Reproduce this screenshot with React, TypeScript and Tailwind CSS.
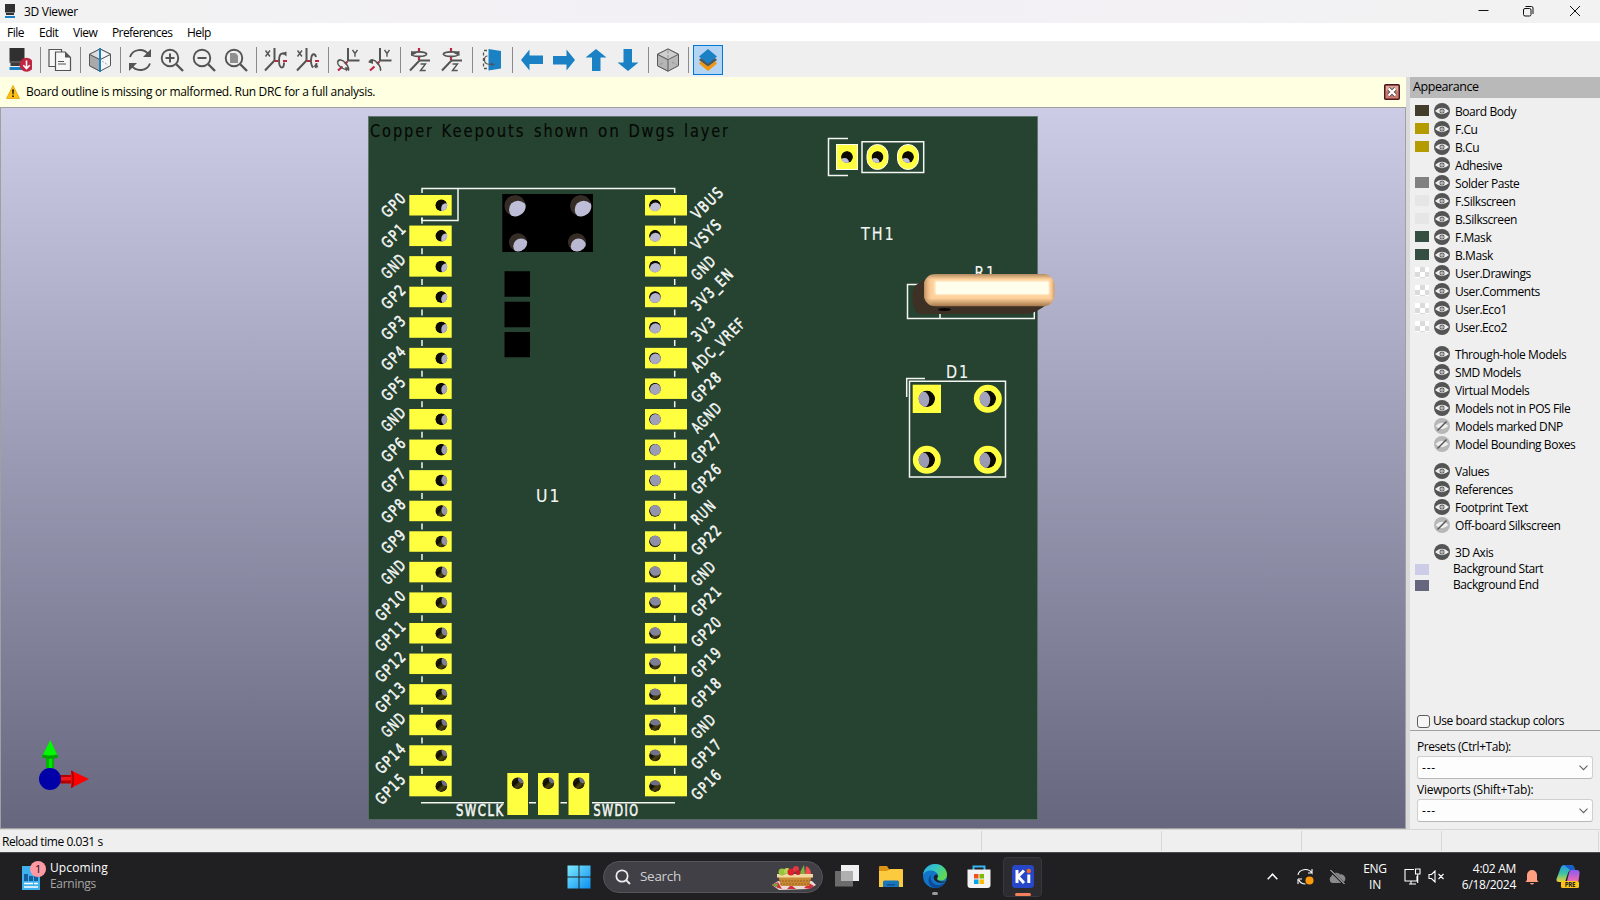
import type { ReactNode } from "react";

const PITCH = 30.57;
const LEFT = ["GP0","GP1","GND","GP2","GP3","GP4","GP5","GND","GP6","GP7","GP8","GP9","GND","GP10","GP11","GP12","GP13","GND","GP14","GP15"];
const RIGHT = ["VBUS","VSYS","GND","3V3_EN","3V3","ADC_VREF","GP28","AGND","GP27","GP26","RUN","GP22","GND","GP21","GP20","GP19","GP18","GND","GP17","GP16"];

const G = "#545454";
const RED = "#bf2641";
const BLUE = "#1a81c4";

function Ic({ children, size = 24 }: { children: ReactNode; size?: number }) {
  return <svg width={size} height={size} viewBox="0 0 24 24" fill="none">{children}</svg>;
}

function Cube({ split }: { split?: boolean }) {
  return (
    <Ic>
      <path d="M12 1 22.5 6.3V17.7L12 23.2 1.5 17.7V6.3Z" fill={split ? "#f6f6f6" : "#b8b8b8"} stroke={G} strokeWidth="1" />
      <path d="M1.5 6.3 12 11.6V23.2L1.5 17.7Z" fill={split ? "#a9a9a9" : "#b5b5b5"} stroke={G} strokeWidth=".9" />
      <path d="M1.5 6.3 12 1 22.5 6.3 12 11.6Z" fill={split ? "#dedede" : "#cfcfcf"} stroke={G} strokeWidth=".9" />
      {split ? (
        <>
          <path d="M12 1 22.5 6.3 12 11.6Z" fill="#f6f6f6" stroke={G} strokeWidth=".9" />
          <path d="M14 13l6 4" stroke="#999" strokeDasharray="2 1.5" strokeWidth=".9" />
          <path d="M12 0v24" stroke={BLUE} strokeWidth="2" />
        </>
      ) : (
        <path d="M12 2.5v9M4 16.5l4-2.2M16 14l5 3" stroke="#8d8d8d" strokeWidth=".9" strokeDasharray="3 1.5" />
      )}
    </Ic>
  );
}

function Mag({ kind }: { kind: "plus" | "minus" | "fit" }) {
  return (
    <Ic>
      <circle cx="10" cy="10" r="8.3" stroke={G} strokeWidth="1.9" />
      <path d="M16 16l7 7" stroke={G} strokeWidth="2.4" />
      {kind !== "fit" && <path d="M5.500 10h9" stroke={G} strokeWidth="2" />}
      {kind === "plus" && <path d="M10 5.500v9" stroke={G} strokeWidth="2" />}
      {kind === "fit" && <path d="M6 5h5.5L14 7.5V15H6Z" fill="#8f8f8f" />}
    </Ic>
  );
}

function RotX({ flip }: { flip?: boolean }) {
  return (
    <Ic>
      <path d="M1.5 2.5l4.500 6M6 2.5l-4.500 6" stroke={G} strokeWidth="1.4" />
      <path d="M10.5 0v12.5L1 22.5" stroke={G} strokeWidth="2" />
      <path d="M11 13h3m5 0h4" stroke={RED} strokeWidth="2.2" />
      <path d={flip ? "M20 9c-1-4-4-3.5-4.7.5-.8 4 0 9 2 10M20.5 15c0 2 0 3.500-1 5" : "M20.500 6c-4-2-5.500 1.500-5.500 6 0 5 1 7.500 3 7.500 1.500 0 2-2 2-5"} stroke={G} strokeWidth="1.9" />
      <path d={flip ? "M17 18.500l3.500-3 2 4Z" : "M18 5l4.500-1.500v5Z"} fill={G} />
    </Ic>
  );
}

function RotY({ flip }: { flip?: boolean }) {
  return (
    <Ic>
      <path d="M16.500 2l2.500 3.500 2.500-3.500M19 5.500v3.300" stroke={G} strokeWidth="1.4" />
      <path d="M12 0v12.500h11.500" stroke={G} strokeWidth="2" />
      <path d="M11.500 13.500L9 16M6.500 18.500l-4.500 4" stroke={RED} strokeWidth="2.2" />
      <path d="M1.500 14.500c1-4 5-3 8 .5 2.500 3 4 6.500 2.500 7.500" stroke={G} strokeWidth="1.6" />
      <path d={flip ? "M0 14l5-3v5Z" : "M9 19l4.500 1-3.500 3.500Z"} fill={G} />
      {!flip && <path d="M1.500 14.500c0 3 5 6.500 9 7" stroke={G} strokeWidth="1.4" />}
    </Ic>
  );
}

function RotZ({ flip }: { flip?: boolean }) {
  return (
    <Ic>
      <path d="M11 0v4.500M11 8v4" stroke={RED} strokeWidth="2.200" />
      <path d={flip ? "M19 4.500c-4-1-14-1-15.500 1.200C2.500 9 18 9.500 18.500 6" : "M4 4.500c4-1 13-1 14.500 1.200C19.500 9 4 9.500 3.500 6"} stroke={G} strokeWidth="1.600" />
      <path d={flip ? "M13.500 5l6-2v5Z" : "M3 3l6 2-6 3Z"} fill={G} />
      <path d="M22 12.500H11.500L2 22.500" stroke={G} strokeWidth="2" />
      <path d="M12.500 16h5l-5 6.500h5.200" stroke={G} strokeWidth="1.400" />
    </Ic>
  );
}

function Arrow({ dir }: { dir: number }) {
  return (
    <Ic><path transform={`rotate(${dir} 12 12)`} d="M1 12 9.500 1.500V7.500H23V16H9.500V22.500Z" fill={BLUE} /></Ic>
  );
}

function Board() {
  return (
    <Ic>
      <path d="M1.500 0h15v13h-15Z" fill="#303030" />
      <path d="M1.500 13h15v2h-15Z" fill="#555" />
      <path d="M2.500 15h13v3h-13Z" fill="#3a3a3a" />
      <path d="M1.500 19h15v3h-15Z" fill={BLUE} />
      <circle cx="18.500" cy="16.800" r="7" fill={RED} />
      <path d="M18.500 12.500v7.500M15.300 17.300l3.200 3.200 3.200-3.200" stroke="#fff" strokeWidth="1.600" />
    </Ic>
  );
}

function Toolbar() {
  const items: ReactNode[] = [
    <Board />, null,
    <Ic>
      <path d="M1 1.500h12.500v17H1Z" fill="#f7f7f7" stroke={G} strokeWidth="1.200" />
      <path d="M7.500 4h9.500l5.500 5.500V22.500h-15Z" fill="#f7f7f7" stroke={G} strokeWidth="1.200" />
      <path d="M17 3.500V9.500h6Z" fill={G} /><path d="M10 13.500h6M10 16h8" stroke={G} strokeWidth="1.200" />
    </Ic>, null,
    <Cube split />, null,
    <Ic>
      <path d="M2 9C5 .5 16 0 20.500 6.500M22 15.500C19 23.500 8 24 3.500 17.500" stroke={G} strokeWidth="1.900" />
      <path d="M23 1v8h-8ZM1 23v-8h8Z" fill={G} />
    </Ic>,
    <Mag kind="plus" />, <Mag kind="minus" />, <Mag kind="fit" />, null,
    <RotX />, <RotX flip />, null, <RotY />, <RotY flip />, null, <RotZ />, <RotZ flip />, null,
    <Ic>
      <path d="M8.500 1 21 3V20.500L8.500 22.500Z" fill={BLUE} />
      <path d="M7 2.500H3.500V20.500H7" stroke={G} strokeWidth="1.300" strokeDasharray="3 2.500" />
      <path d="M7.500 8c-4 0-4 7 0 8l6 .5" stroke={G} strokeWidth="1.200" /><path d="M11 14.500l4 2-4 1.500Z" fill={G} />
    </Ic>, null,
    <Arrow dir={0} />, <Arrow dir={180} />, <Arrow dir={90} />, <Arrow dir={270} />, null,
    <Cube />, null,
    <Ic>
      <path d="M12 23 3 15.500l2-2 7 5 7-5 2 2Z" fill="#f2960c" /><path d="M12 18.500 3 12l2-2 7 4.500L19 10l2 2Z" fill="#545454" />
      <path d="M12 1l9 7.500-9 7.500-9-7.500Z" fill={BLUE} />
    </Ic>,
  ];
  return (
    <div className="flex h-9 shrink-0 items-center bg-[#efefef] pt-[2px] pl-1">
      {items.map((it, i) =>
        it === null ? (
          <div key={i} className="flex h-[26px] w-2 justify-center"><div className="w-px bg-[#8b8b8b]" /></div>
        ) : (
          <div key={i} className="flex w-8 justify-center">
            {i === items.length - 1 ? (
              <div className="flex h-[30px] w-[30px] items-center justify-center border border-[#0078d7] bg-[#b3d4f2]">{it}</div>
            ) : it}
          </div>
        )
      )}
    </div>
  );
}

function Clip({ x, y, r, children }: { x: number; y: number; r: number; children: ReactNode }) {
  const id = `c${Math.round(x * 10)}-${Math.round(y * 10)}`;
  return (
    <g clipPath={`url(#${id})`}>
      <clipPath id={id}><circle cx={x} cy={y} r={r} /></clipPath>
      {children}
    </g>
  );
}

function Hole({ x, y, side, row }: { x: number; y: number; side: "l" | "r"; row: number }) {
  const t = row / 19;
  return (
    <Clip x={x} y={y} r={6}>
      <circle cx={x} cy={y} r="6" fill={t < 0.5 ? "#0c0b02" : "url(#barrel)"} />
      {side === "l" ? (
        <ellipse cx={x + 4.2} cy={y + 3.5 - t * 8} rx={4.3 - t * 0.4} ry={5.6 - t * 1.2} fill="url(#bg)" />
      ) : (
        <ellipse cx={x + 0.5} cy={y + 3 - t * 7} rx={5.6} ry={5.8 - Math.max(0, t - 0.5) * 5} fill="url(#bg)" />
      )}
    </Clip>
  );
}

function Silk({ x, y, w, size, anchor = "start", color = "#f4f6f4", rot, children, bold }: { x: number; y: number; w: number; size: number; anchor?: "start" | "middle" | "end"; color?: string; rot?: boolean; children: string; bold?: boolean }) {
  return (
    <text x={x} y={y} fontSize={size} textLength={w} letterSpacing={size * 0.13} lengthAdjust="spacingAndGlyphs" textAnchor={anchor} fill={color} stroke={color} strokeWidth={bold ? 0.6 : 0.15} fontFamily='"DejaVu Sans", sans-serif' transform={rot ? `rotate(-45 ${x} ${y})` : undefined}>
      {children}
    </text>
  );
}

function Scene() {
  const rowY = (i: number) => 205.3 + i * PITCH;
  return (
    <svg width="1404" height="720" viewBox="1 108 1404 720" className="block">
      <defs>
        <linearGradient id="bg" gradientUnits="userSpaceOnUse" x1="0" y1="108" x2="0" y2="828">
          <stop offset="0" stopColor="#cccce6" /><stop offset="1" stopColor="#66667f" />
        </linearGradient>
        <linearGradient id="barrel" x1="0" y1="0" x2="1" y2="1">
          <stop offset="0" stopColor="#3a3408" /><stop offset=".4" stopColor="#0c0b02" /><stop offset=".6" stopColor="#4a430e" /><stop offset="1" stopColor="#0c0b02" />
        </linearGradient>
        <linearGradient id="th" x1="0" y1="0" x2="0" y2="1">
          <stop offset="0" stopColor="#b08a60" /><stop offset=".16" stopColor="#ffd19a" /><stop offset=".75" stopColor="#ffd09a" /><stop offset="1" stopColor="#a5794c" />
        </linearGradient>
        <linearGradient id="thx" x1="0" y1="0" x2="1" y2="0">
          <stop offset="0" stopColor="#96683c" stopOpacity=".65" /><stop offset=".07" stopColor="#ffd09a" stopOpacity="0" /><stop offset=".96" stopColor="#ffd09a" stopOpacity="0" /><stop offset="1" stopColor="#96683c" stopOpacity=".55" />
        </linearGradient>
        <filter id="soft" x="-10%" y="-30%" width="120%" height="160%"><feGaussianBlur stdDeviation="1.2" /></filter>
      </defs>
      <rect x="1" y="108" width="1404" height="720" fill="url(#bg)" />
      <rect x="368.500" y="116.500" width="669" height="703" fill="#264230" stroke="#5c7168" strokeWidth=".8" />
      <g>
        <Silk x={370} y={136.700} w={64} size={18} color="#050805">Copper</Silk>
        <Silk x={441.500} y={136.700} w={84} size={18} color="#050805">Keepouts</Silk>
        <Silk x={534} y={136.700} w={56} size={18} color="#050805">shown</Silk>
        <Silk x={598} y={136.700} w={23} size={18} color="#050805">on</Silk>
        <Silk x={628.500} y={136.700} w={47.500} size={18} color="#050805">Dwgs</Silk>
        <Silk x={684} y={136.700} w={46} size={18} color="#050805">layer</Silk>
      </g>

      <g stroke="#f4f6f4" strokeWidth="1.500" fill="none">
        <path d="M422 193v-4.500H674.700V193M458 188.500V220.500H422V217.500" />
        <path d="M421 802.700H504M529 802.700h7M560.500 802.700h6.500M592 802.700h83" />
        {LEFT.slice(0, 19).map((_, i) => (
          <path key={i} d={`M422 ${rowY(i) + 12.500}v6M674.700 ${rowY(i) + 12.500}v6`} />
        ))}
        <path d="M848 138.500H828.500V175.500H848M862 141.700H923.700V172.500H862Z" />
        <path d="M907.500 284.500H1034.300V318.500H907.500ZM940 314v5" />
        <path d="M909.500 381.300H1005.500V477H909.500ZM925 378.500H906.700V397" />
      </g>

      {LEFT.map((l, i) => (
        <g key={i}>
          <rect x="409.300" y={rowY(i) - 10.300} width="42.400" height="20.500" fill="#ffff40" />
          <Hole x={441.300} y={rowY(i)} side="l" row={i} />
          <Silk x={407.500} y={rowY(i) - 6.500} w={l.length * 8.500 + 2.500} size={15.500} anchor="end" rot bold>{l}</Silk>
        </g>
      ))}
      {RIGHT.map((l, i) => (
        <g key={i}>
          <rect x="645" y={rowY(i) - 10.300} width="42" height="20.500" fill="#ffff40" />
          <Hole x={655} y={rowY(i)} side="r" row={i} />
          <Silk x={697.700} y={rowY(i) + 14.800} w={l.length * 8.300 + (i === 0 ? 5.500 : 3)} size={15.500} rot bold>{l}</Silk>
        </g>
      ))}
      {[507.300, 538, 568.500].map((x) => (
        <g key={x}>
          <rect x={x} y="773" width="20.700" height="42" fill="#ffff40" />
          <Hole x={x + 10.300} y={783.300} side="l" row={19} />
        </g>
      ))}
      <Silk x={456} y={816.300} w={48.500} size={15.500} bold>SWCLK</Silk>
      <Silk x={593.500} y={816.300} w={46} size={15.500} bold>SWDIO</Silk>

      <rect x="502.300" y="194" width="90.700" height="58" fill="#000" />
      {[[515, 205.700, 10.700], [580.700, 205.700, 10.700], [518, 242.300, 9.200], [577, 242.300, 9.200]].map(([x, y, r]) => (
        <Clip key={`${x}-${y}`} x={x} y={y} r={r}>
          <circle cx={x} cy={y} r={r} fill="#352c25" />
          <circle cx={x + (x === 577 ? 1.5 : 3)} cy={y + 4} r={r * 0.84} fill="url(#bg)" />
        </Clip>
      ))}
      <path d="M504.500 271.300h25.500v25.500h-25.500ZM504.500 301.700h25.500v25.500h-25.500ZM504.500 332h25.500v25.300h-25.500Z" fill="#000" />
      <Silk x={536} y={502} w={25.500} size={18.500}>U1</Silk>

      <rect x="836.500" y="144.500" width="21" height="25" fill="#ffff40" stroke="#fffff0" strokeWidth="1" />
      {[877.500, 908].map((x) => (
        <rect key={x} x={x - 10.500} y="144.500" width="21" height="25" rx="10.500" fill="#ffff40" stroke="#fffff0" strokeWidth="1" />
      ))}
      {[847, 877.500, 908].map((x) => (
        <Clip key={x} x={x} y={157} r={6}>
          <circle cx={x} cy="157" r="6" fill="#0c0b02" /><circle cx={x - 2.500} cy="162.500" r="4.500" fill="#c0c0dc" />
        </Clip>
      ))}
      <Silk x={861} y={240} w={34.500} size={18.500}>TH1</Silk>
      <Silk x={974.500} y={279} w={22} size={18.500}>R1</Silk>
      <Silk x={946} y={377.500} w={24} size={18.500}>D1</Silk>

      <path d="M927 278 916 285Q912.500 288 912.500 297Q912.500 314 922 314H1028Q1034 314 1049 303Z" fill="#3d3025" />
      <ellipse cx="944.500" cy="309.500" rx="6.500" ry="1.500" fill="#080504" />
      <rect x="924" y="274" width="130.500" height="32.300" rx="11" fill="url(#th)" />
      <rect x="924" y="274" width="130.500" height="32.300" rx="11" fill="url(#thx)" />
      <rect x="935" y="281" width="114" height="13.500" rx="1" fill="#fffde8" filter="url(#soft)" />
      <rect x="936" y="282" width="112.500" height="12" fill="#fffeec" />

      <rect x="912.700" y="384.700" width="28.300" height="28.300" fill="#ffff40" />
      {[[987.800, 398.800], [926.800, 459.800], [987.800, 459.800]].map(([x, y]) => (
        <circle key={`${x}-${y}`} cx={x} cy={y} r="14" fill="#ffff40" />
      ))}
      {[[926.800, 398.800], [987.800, 398.800], [926.800, 459.800], [987.800, 459.800]].map(([x, y]) => (
        <Clip key={`${x}-${y}`} x={x} y={y} r={8.300}>
          <circle cx={x} cy={y} r="8.300" fill="#0c0b02" /><ellipse cx={x - 3.800} cy={y + 0.800} rx="6.300" ry="8" fill="url(#bg)" />
        </Clip>
      ))}

      <path d="M46 768V757H54V768Z" fill="#00b400" /><path d="M49 768V757h3v11Z" fill="#00e800" />
      <path d="M50.300 740 58.500 757.500H41.500Z" fill="#00f800" /><path d="M41.500 757.500q8.500 2.500 17 0l-1.500-3q-7 2-14 0Z" fill="#00a000" />
      <path d="M60 775H72V783.500H60Z" fill="#b40000" /><path d="M60 777H72v3.500H60Z" fill="#f01818" />
      <path d="M89 779 71 770.500V788Z" fill="#ff0000" /><path d="M71 770.500q3 8.500 0 17.500l2-1q2-7.500 0-15.500Z" fill="#980000" />
      <circle cx="50" cy="779" r="11" fill="#0000a8" />
    </svg>
  );
}

function Eye({ off }: { off?: boolean }) {
  return off ? (
    <svg width="16" height="16" viewBox="0 0 16 16"><circle cx="8" cy="8" r="8" fill="#b7b7b7" /><path d="M1.500 8Q8 1.500 14.500 8 8 14.500 1.500 8" fill="#efefef" /><path d="M3.500 12.500 12.500 3.500" stroke="#545454" strokeWidth="1.500" /></svg>
  ) : (
    <svg width="16" height="16" viewBox="0 0 16 16"><circle cx="8" cy="8" r="8" fill="#545454" /><path d="M1 8Q8 1.500 15 8 8 14.500 1 8" fill="#efefef" /><circle cx="8" cy="8" r="2.500" fill="#545454" /><circle cx="8" cy="8" r="1.600" fill="#efefef" /><circle cx="8" cy="8" r=".7" fill="#545454" /></svg>
  );
}

function Swatch({ c }: { c?: string }) {
  if (c === "check")
    return (
      <svg width="14" height="11" viewBox="0 0 14 11"><path d="M0 0h14v11H0Z" fill="#fff" /><path d="M5 0h5v5H5ZM0 5h5v5H0ZM10 5h4v5h-4ZM5 10h5v1H5Z" fill="#dbdbdb" /></svg>
    );
  return <svg width="14" height="11"><rect width="14" height="11" fill={c ?? "none"} /></svg>;
}

function Row({ c, t, off }: { c?: string; t: string; off?: boolean }) {
  return (
    <div className="flex h-[18px] items-center">
      <div className="mr-[5px] flex pb-px"><Swatch c={c} /></div>
      <Eye off={off} />
      <span className="pt-px pl-[5px]">{t}</span>
    </div>
  );
}

function Select() {
  return (
    <div className="flex h-[23px] items-center justify-between rounded-[3px] border border-[#cfcfcf] border-b-[#b8b8b8] bg-[#fdfdfd] pr-1 pl-1">
      <span className="tracking-[0.8px]">---</span>
      <svg width="9" height="6" viewBox="0 0 9 6" fill="none"><path d="M.5.7l4 4 4-4" stroke="#606060" strokeWidth="1.100" /></svg>
    </div>
  );
}

function Appearance() {
  return (
    <aside className="flex w-[190px] shrink-0 flex-col bg-[#efefef] tracking-[-0.43px]">
      <div className="flex h-[21px] items-center bg-[#b9b9b9] pl-[3px] text-[12.500px]">Appearance</div>
      <div className="flex flex-col gap-[9px] pt-1 pl-[5px]">
        <div>
          <Row c="#443d2b" t="Board Body" /><Row c="#b49b00" t="F.Cu" /><Row c="#b49b00" t="B.Cu" /><Row t="Adhesive" />
          <Row c="#808080" t="Solder Paste" /><Row c="#e6e6e6" t="F.Silkscreen" /><Row c="#e6e6e6" t="B.Silkscreen" />
          <Row c="#344f41" t="F.Mask" /><Row c="#344f41" t="B.Mask" />
          <Row c="check" t="User.Drawings" /><Row c="check" t="User.Comments" /><Row c="check" t="User.Eco1" /><Row c="check" t="User.Eco2" />
        </div>
        <div>
          <Row t="Through-hole Models" /><Row t="SMD Models" /><Row t="Virtual Models" /><Row t="Models not in POS File" />
          <Row off t="Models marked DNP" /><Row off t="Model Bounding Boxes" />
        </div>
        <div><Row t="Values" /><Row t="References" /><Row t="Footprint Text" /><Row off t="Off-board Silkscreen" /></div>
        <div>
          <Row t="3D Axis" />
          <div className="flex h-4 items-center gap-6"><Swatch c="#cccce6" />Background Start</div>
          <div className="flex h-4 items-center gap-6"><Swatch c="#66667f" />Background End</div>
        </div>
      </div>
      <label className="mt-auto flex h-[18px] items-center gap-[3px] pl-[7px]">
        <span className="h-[13px] w-[13px] rounded-[3px] border border-[#5c5c5c] bg-[#f6f6f6]" />Use board stackup colors
      </label>
      <div className="flex h-[99px] flex-col border-t border-[#a0a0a0] px-[7px] pt-2">
        <div className="flex h-[17px] items-center pb-px">Presets (Ctrl+Tab):</div>
        <Select />
        <div className="mt-[3px] flex h-[17px] items-center pb-px tracking-[-0.25px]">Viewports (Shift+Tab):</div>
        <Select />
      </div>
    </aside>
  );
}

function Taskbar() {
  return (
    <footer className="flex h-12 shrink-0 items-center border-t border-[#4a4a4a] bg-[#202022] font-['Open_Sans','Noto_Sans',sans-serif] text-[12px] text-white">
      <div className="flex w-[567px] items-center gap-[4px] pl-[22px] pb-[2px]">
        <svg width="24" height="30" viewBox="0 0 24 30">
          <path d="M0 5h18v24H0Z" fill="#3fb0ee" /><path d="M2 13h4v7H2ZM7 15h4v5H7ZM12 13h4v7h-4Z" fill="#155e9c" />
          <path d="M2 22.500h9M12 22.500h4M2 26h14" stroke="#fff" strokeWidth="1.600" />
          <circle cx="16" cy="8" r="8" fill="#ff99a4" /><text x="16" y="12" fontSize="11" textAnchor="middle" fill="#111" fontFamily="Open Sans">1</text>
        </svg>
        <div className="leading-4"><div className="tracking-[0.1px]">Upcoming</div><div className="text-[#a5a5a5]">Earnings</div></div>
      </div>
      <svg width="24" height="24" viewBox="0 0 24 24">
        <defs><linearGradient id="win" x2="1" y2="1"><stop stopColor="#7eeaff" /><stop offset="1" stopColor="#0c8ff0" /></linearGradient></defs>
        <path d="M.5.5h11v11H.5ZM12.500.5h11v11h-11ZM.5 12.500h11v11H.5ZM12.500 12.500h11v11h-11Z" fill="url(#win)" />
      </svg>
      <div className="ml-[12px] flex h-8 w-[220px] items-center rounded-full border border-[#55555a] bg-[#404046] pl-[11px]">
        <svg width="16" height="16" viewBox="0 0 16 16" fill="none"><circle cx="7" cy="7" r="5.700" stroke="#eee" strokeWidth="1.700" /><path d="M11 11l4 4" stroke="#eee" strokeWidth="1.800" /></svg>
        <span className="ml-[9px] text-[13.500px] text-[#d0d0d0]">Search</span>
        <svg className="ml-auto mr-[5px]" width="46" height="26" viewBox="0 0 46 26">
          <path d="M1 21 7 17H41L45 21 38 25 8 26Z" fill="#ead9d4" /><path d="M1 21l6-3 4 7-4-1ZM16 25l4-4 5 4ZM33 24l5-5 5 3-4 3Z" fill="#d3303c" /><path d="M1 21l6-2-1 4Z" fill="#72a83a" />
          <path d="M7 11H41L38 22H10Z" fill="#c98a36" /><path d="M6 10H42V13.500H6Z" fill="#f0d8a0" /><path d="M8 17h31M9 20h29" stroke="#9b5e20" strokeWidth="1" strokeDasharray="2 1" />
          <circle cx="11" cy="8" r="3.500" fill="#9bc53d" /><circle cx="16" cy="7" r="3" fill="#b9d857" /><circle cx="20" cy="8" r="3.500" fill="#d8232f" /><circle cx="25" cy="5" r="3" fill="#e23842" /><path d="M28 10 33 1 34 10Z" fill="#7db53c" /><path d="M34 10 35 2q5 2 5 8Z" fill="#ee4c50" /><circle cx="27" cy="8.500" r="2.500" fill="#c81e2c" />
        </svg>
      </div>
      <svg className="ml-3" width="24" height="24" viewBox="0 0 24 24"><path d="M6 0h18v16H6Z" fill="#f0f0f0" /><path d="M0 6h18v15.500H0Z" fill="#6c6c6c" /><path d="M6 6h12v10H6Z" fill="#b0b0b0" /></svg>
      <svg className="ml-5" width="24" height="24" viewBox="0 0 24 24"><path d="M0 2q0-1 1-1h7l2 3v5H0Z" fill="#dc9412" /><path d="M0 6h8l3-2h12q1 0 1 1v17H0Z" fill="#fcca3e" /><path d="M4 22v-5q0-1.500 1.500-1.500h13Q20 15.500 20 17v5Z" fill="#1976bd" /><path d="M8 19h8v1.500H8Z" fill="#0d538d" /></svg>
      <div className="ml-5 flex flex-col items-center gap-1 pt-[6px]">
        <svg width="24" height="24" viewBox="0 0 24 24">
          <defs><linearGradient id="eg" x2="1" y2=".5"><stop stopColor="#2ba4e8" /><stop offset=".5" stopColor="#35c6c4" /><stop offset="1" stopColor="#5ed850" /></linearGradient></defs>
          <circle cx="12" cy="12" r="12" fill="#1275c9" />
          <path d="M0 11C1 4 6 0 12 0c7 0 12 5 12 10.500 0 4-3 6-6 6-2.500 0-4.500-.8-4-2 1-1 1.500-2 1-3.500C14 8 11 6.500 8 6.500c-4 0-7 2-8 4.500Z" fill="url(#eg)" />
          <path d="M9 10c-3 3-1 10 5 11 3 .5 6-1 8-3-1 4-6 6-10 6-7-1-9-10-3-14Z" fill="#0b4c9a" />
          <path d="M14 10.500c-3-.5-4.500 3-2 6 3 3 8 3 11.500.5-1 .5-9 2-9.500-2.500.8-1 1.300-2.500 0-4Z" fill="#202022" />
        </svg>
        <span className="h-[3px] w-[6px] rounded-full bg-[#9a9a9a]" />
      </div>
      <svg className="ml-5" width="24" height="24" viewBox="0 0 24 24"><path d="M6.500 6V1.500h11V6" stroke="#36b6f0" strokeWidth="2" fill="none" /><path d="M.5 4.500h23v15.500q0 3-3 3h-17q-3 0-3-3Z" fill="#f2f2f2" /><path d="M7 9h4.500v4.500H7Z" fill="#f25022" /><path d="M12.500 9H17v4.500h-4.500Z" fill="#7fba00" /><path d="M7 14.500h4.500V19H7Z" fill="#00a4ef" /><path d="M12.500 14.500H17V19h-4.500Z" fill="#ffb900" /></svg>
      <div className="ml-3 flex h-10 w-[39px] flex-col items-center justify-end rounded border border-[#38383c] bg-[#2c2c30]">
        <svg width="22" height="24" viewBox="0 0 22 24"><rect width="22" height="23" rx="3.500" fill="#2846c8" /><path d="M5 5v13M12 5.500 6 11.500l6 6.500" stroke="#fff" strokeWidth="3" fill="none" /><path d="M16.800 9.500V18" stroke="#fff" strokeWidth="3" /><circle cx="16.800" cy="6" r="2.200" fill="#f26a1b" /></svg>
        <span className="mt-1 h-[3px] w-4 rounded-full bg-[#f5805c]" />
      </div>
      <div className="ml-auto flex items-center pr-[20px]">
        <svg width="11" height="7" viewBox="0 0 11 7" fill="none"><path d="M.7 6.200l4.800-5 4.800 5" stroke="#fff" strokeWidth="1.500" /></svg>
        <svg className="ml-[19px]" width="17" height="17" viewBox="0 0 17 17" fill="none"><path d="M1 7C2 1 11-.5 15 5V1M15 5h-4M1 11v5M1 11h4M2 12c1 2.500 4 4 6.500 4" stroke="#fff" strokeWidth="1.100" /><circle cx="12.500" cy="12.500" r="4" fill="#ff9a0c" /></svg>
        <svg className="ml-[14px]" width="18" height="14" viewBox="0 0 18 14"><path d="M4 13a4 4 0 0 1-.5-7A5 5 0 0 1 12 4.500a4.300 4.300 0 0 1 2 8.500Z" fill="#8a8a8a" /><path d="M2 0l14 14" stroke="#202022" strokeWidth="2.500" /><path d="M2.500 0l14 14" stroke="#eee" strokeWidth="1" /></svg>
        <div className="ml-[16px] w-[26px] text-center leading-4 tracking-[-0.3px]"><div>ENG</div><div>IN</div></div>
        <svg className="ml-[16px]" width="18" height="17" viewBox="0 0 18 17" fill="none"><path d="M10 1.500H1V13h12V8M5 16h7M7 13v3M11.500 1h4.500v5h-4.500ZM13.700 6v9" stroke="#fff" strokeWidth="1.100" /></svg>
        <svg className="ml-[6px]" width="17" height="13" viewBox="0 0 17 13" fill="none"><path d="M1 4.500h2.500L7 1v11L3.500 8.500H1ZM10.500 4l5 5M15.500 4l-5 5" stroke="#fff" strokeWidth="1.100" /></svg>
        <div className="ml-[4px] w-[67px] text-right leading-4 whitespace-nowrap tracking-[-0.3px]"><div>4:02 AM</div><div>6/18/2024</div></div>
        <svg className="ml-[9px]" width="14" height="16" viewBox="0 0 14 16"><path d="M2 11V6a5 5 0 0 1 10 0v5l1.500 2H.5ZM5 14h4q-.5 1.500-2 1.500T5 14Z" fill="#ff9f80" /></svg>
        <svg className="ml-[17px]" width="24" height="23" viewBox="0 0 24 23">
          <defs><linearGradient id="ca" x2="0" y2="1"><stop stopColor="#2498ee" /><stop offset=".5" stopColor="#3cc4a2" /><stop offset="1" stopColor="#f0d030" /></linearGradient><linearGradient id="cb" x2="0" y2="1"><stop stopColor="#8a5cf0" /><stop offset="1" stopColor="#f06ab0" /></linearGradient></defs>
          <path d="M5 2Q6 0 8 0h7q2 0 3 2l1 3h-4q-2 0-3 3l-3 9H3q-3 0-2.500-3Z" fill="url(#ca)" /><path d="M15 5h6q3 0 2.500 4l-1 7H11l2-8q.5-3 2-3Z" fill="url(#cb)" /><path d="M8 0h7q2 0 3 2l1 3h-5Z" fill="#1a5dc8" />
          <rect x="5" y="16" width="18" height="7" rx="1.500" fill="#fcc419" /><text x="14" y="21.800" fontSize="6.200" fontWeight="700" textAnchor="middle" fill="#222" fontFamily="Open Sans">PRE</text>
        </svg>
      </div>
    </footer>
  );
}

export default function App() {
  return (
    <div className="flex h-[900px] w-[1600px] flex-col overflow-hidden bg-[#efefef] font-['Open_Sans','Noto_Sans',sans-serif] text-[12px] tracking-[-0.3px] text-black">
      <header className="flex h-[23px] shrink-0 items-center bg-linear-to-r from-[#f2f2f2] via-[#f3f0f5] to-[#f2f2f2] pb-px pl-[5px]">
        <svg width="10" height="14" viewBox="0 0 10 14"><path d="M0 0h10v8H0Z" fill="#303030" /><path d="M0 8h10v1H0Z" fill="#888" /><path d="M1 9h8v2H1Z" fill="#333" /><path d="M0 12h10v2H0Z" fill={BLUE} /></svg>
        <span className="pt-px pl-[9px]">3D Viewer</span>
        <svg className="ml-auto mr-[19px]" width="103" height="12" viewBox="0 0 103 12" fill="none" stroke="#111" strokeWidth="1">
          <path d="M.5 5.500h10M92 1l10 10M102 1 92 11" /><rect x="45.500" y="3.500" width="7.500" height="7.500" rx="1.500" /><path d="M47.500 1.500h6q1.500 0 1.500 1.500v6" />
        </svg>
      </header>
      <nav className="flex h-[18px] shrink-0 items-center bg-white pt-[2px] pl-[7px] tracking-[-0.5px]">
        <span className="w-8">File</span><span className="w-[34px]">Edit</span><span className="w-[39px]">View</span><span className="w-[75px] tracking-[-0.6px]">Preferences</span><span>Help</span>
      </nav>
      <Toolbar />
      <div className="flex h-[752px] shrink-0">
        <main className="flex w-[1406px] shrink-0 flex-col">
          <div className="flex h-[30px] items-center bg-[#ffffe1] pl-[6px]">
            <svg width="14" height="14" viewBox="0 0 14 14"><path d="M7 .5 13.500 13.500H.5Z" fill="#fdc116" stroke="#e3a008" strokeWidth=".8" strokeLinejoin="round" /><path d="M6.100 4.500h1.800L7.500 9.500h-1ZM6.200 10.500h1.600V12H6.200Z" fill="#111" /></svg>
            <span className="pl-[6px]">Board outline is missing or malformed. Run DRC for a full analysis.</span>
            <svg className="ml-auto mr-[6px]" width="16" height="16" viewBox="0 0 16 16"><rect x=".7" y=".7" width="14.600" height="14.600" rx="1" fill="#d2786c" stroke="#4a1a22" strokeWidth="1.400" /><path d="M2 2h12v5H2Z" fill="#dfa69c" /><path d="M4.500 4.500l7 7M11.500 4.500l-7 7" stroke="#5a4a4a" strokeWidth="4" /><path d="M4.500 4.500l7 7M11.500 4.500l-7 7" stroke="#fff" strokeWidth="2.400" /></svg>
          </div>
          <div className="h-[722px] border border-[#a0a0a0]"><Scene /></div>
        </main>
        <div className="w-1 shrink-0 bg-[#dadada]" />
        <Appearance />
      </div>
      <div className="flex h-[23px] shrink-0 items-center border-t border-[#d7d7d7] pl-[2px]">
        <span className="w-[979px] pt-[2px] tracking-[-0.45px]">Reload time 0.031 s</span>
        <div className="h-5 w-[180px] border-l border-[#d7d7d7]" /><div className="h-5 w-[140px] border-l border-[#d7d7d7]" />
        <div className="h-5 w-[140px] border-l border-[#d7d7d7]" /><div className="h-5 w-[158px] border-x border-[#d7d7d7]" />
      </div>
      <Taskbar />
    </div>
  );
}
